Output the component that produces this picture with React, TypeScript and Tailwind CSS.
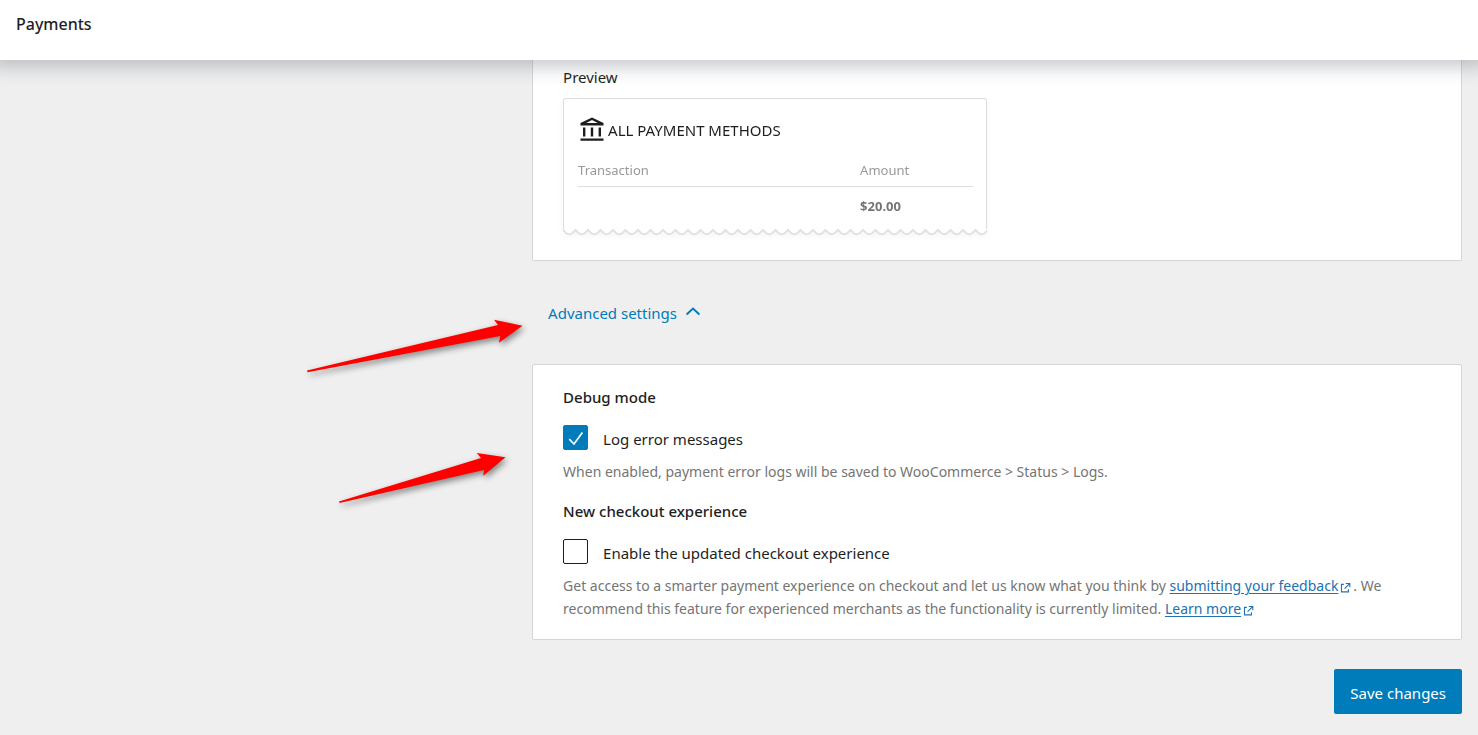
import { useState } from "react";
import type { ReactNode } from "react";
import { clsx } from "clsx";

type CheckOptionProps = {
  id: string;
  label: string;
  checked: boolean;
  onChange: (checked: boolean) => void;
};

function CheckOption({ id, label, checked, onChange }: CheckOptionProps) {
  return (
    <div className="flex items-center gap-[15px]">
      <span className="grid shrink-0">
        <input
          id={id}
          type="checkbox"
          checked={checked}
          onChange={(e) => onChange(e.target.checked)}
          className="col-start-1 row-start-1 size-[25px] appearance-none rounded-[2px] border border-[#1e1e1e] bg-white checked:border-[#007cba] checked:bg-[#007cba]"
        />
        <svg
          viewBox="0 0 25 25"
          className={clsx(
            "pointer-events-none col-start-1 row-start-1 size-[25px]",
            !checked && "hidden"
          )}
          fill="none"
          stroke="#fff"
          strokeWidth="1.7"
          aria-hidden="true"
        >
          <path d="M6.3 14.2 L11 19 L19.4 7.6" />
        </svg>
      </span>
      <label htmlFor={id} className="pt-1 text-[15px] leading-[21px] text-[#1e1e1e]">
        {label}
      </label>
    </div>
  );
}

function ExternalLink({ href, children }: { href: string; children: ReactNode }) {
  return (
    <a href={href} className="text-[#2271b1]">
      <span className="underline underline-offset-2">{children}</span>
      <svg
        viewBox="0 0 12 12"
        className="mx-0.5 inline-block size-[11px] align-[-2px]"
        fill="none"
        stroke="currentColor"
        strokeWidth="1.2"
        aria-hidden="true"
      >
        <path d="M4.2 2.6H1.6v8.2h7.6V8M6.3 1.6h4.4v4.2M10.5 1.8 5 7.3" />
      </svg>
    </a>
  );
}

function BankIcon() {
  return (
    <svg viewBox="0 0 24 24" className="size-6 shrink-0" fill="#1e1e1e" aria-hidden="true">
      <path
        fillRule="evenodd"
        d="M12 .6 23.5 6v2.6H.5V6zM12 2.9 6.2 6h11.6z"
      />
      <path d="M3 10.6h2.4v9H3zM10.8 10.6h2.4v9h-2.4zM18.6 10.6H21v9h-2.4zM.5 21.4h23v2.4H.5z" />
    </svg>
  );
}

// Torn paper edge at the bottom of the statement
function TornEdge() {
  return (
    <svg className="block h-[7px] w-full" aria-hidden="true">
      <defs>
        <pattern id="torn" width="12.5" height="7" patternUnits="userSpaceOnUse">
          <path d="M-1 -1V1.5L0 .8 L3.2 4.1 Q6.25 6.6 9.3 4.1 L12.5 .8 L13.5 1.5V-1z" fill="#fff" />
          <path
            d="M-1 1.8 L0 .8 L3.2 4.1 Q6.25 6.6 9.3 4.1 L12.5 .8 L13.5 1.8"
            fill="none"
            stroke="#ddd"
            strokeWidth="1.6"
          />
        </pattern>
      </defs>
      <rect width="100%" height="7" fill="url(#torn)" />
    </svg>
  );
}

function StatementPreview() {
  return (
    <div className="max-w-[424px] drop-shadow-[0_2px_3px_rgba(0,0,0,0.04)]">
      <div className="rounded-t-[3px] border border-b-0 border-[#ddd] bg-white pt-[18px] pr-[13px] pb-[13px] pl-[14px]">
        <div className="flex items-center gap-1 pl-[2px]">
          <BankIcon />
          <span className="pt-0.5 text-[15px] leading-5 text-[#1e1e1e]">ALL PAYMENT METHODS</span>
        </div>
        <table className="mt-[19px] w-full table-fixed text-left text-[13px] leading-5">
          <thead>
            <tr className="border-b border-[#ddd] text-[#999]">
              <th className="pb-1.5 font-normal">Transaction</th>
              <th className="w-[113px] pb-1.5 font-normal">Amount</th>
            </tr>
          </thead>
          <tbody>
            <tr className="text-[#757575]">
              <td />
              <td className="pt-[9px] font-bold">$20.00</td>
            </tr>
          </tbody>
        </table>
      </div>
      <TornEdge />
    </div>
  );
}

// Callout arrows that point at the settings
function Arrows() {
  return (
    <svg
      width="540"
      height="520"
      className="pointer-events-none absolute top-0 left-0 drop-shadow-[2px_3px_3px_rgba(0,0,0,0.45)]"
      fill="#f00"
      aria-hidden="true"
    >
      <path d="M307 370.5 498 325 494 319.7 522.5 325.7 499 342.7 500.3 336 307.5 372.2z" />
      <path d="M339 501.5 481 458 476.7 453 505.5 457.3 483.3 475.7 484 470 339.5 503z" />
    </svg>
  );
}

export default function App() {
  const [advancedOpen, setAdvancedOpen] = useState(true);
  const [debug, setDebug] = useState(true);
  const [newCheckout, setNewCheckout] = useState(false);

  return (
    <div className="relative min-h-screen bg-[#efefef] font-['Noto_Sans','Open_Sans',sans-serif]">
      <header className="relative z-10 flex h-[60px] items-center bg-white px-4 pb-3 shadow-[0_0_16px_8px_rgba(85,93,102,0.3)]">
        <h1 className="text-base leading-6 font-medium text-[#1e1e1e]">Payments</h1>
      </header>

      <main className="pr-4 pb-5 pl-[36%]">
        <section className="rounded-b-[2px] border border-t-0 border-[#d5d5d5] bg-white px-[30px] pt-[7px] pb-6">
          <h2 className="mb-[11px] text-[15px] leading-5 text-[#1e1e1e]">Preview</h2>
          <StatementPreview />
        </section>

        <button
          type="button"
          aria-expanded={advancedOpen}
          onClick={() => setAdvancedOpen((v) => !v)}
          className="mt-10 mb-[39px] ml-4 flex items-center gap-2 text-[15px] leading-6 text-[#007cba]"
        >
          Advanced settings
          <svg
            viewBox="0 0 16 16"
            className={clsx("size-4", !advancedOpen && "rotate-180")}
            fill="none"
            stroke="currentColor"
            strokeWidth="2"
            aria-hidden="true"
          >
            <path d="M1.6 9.4 8 3.6 14.4 9.4" />
          </svg>
        </button>

        {advancedOpen && (
          <section className="rounded-[2px] border border-[#d5d5d5] bg-white px-[30px] pt-5 pb-[19px]">
            <h2 className="mb-4 text-[15px] leading-6 font-medium text-[#1e1e1e]">Debug mode</h2>
            <CheckOption
              id="debug-log"
              label="Log error messages"
              checked={debug}
              onChange={setDebug}
            />
            <p className="mt-2.5 text-sm leading-[23px] text-[#757575]">
              When enabled, payment error logs will be saved to WooCommerce &gt; Status &gt; Logs.
            </p>

            <h2 className="mt-4 mb-4 text-[15px] leading-6 font-medium text-[#1e1e1e]">
              New checkout experience
            </h2>
            <CheckOption
              id="new-checkout"
              label="Enable the updated checkout experience"
              checked={newCheckout}
              onChange={setNewCheckout}
            />
            <p className="mt-2.5 text-sm leading-[23px] text-[#757575]">
              Get access to a smarter payment experience on checkout and let us know what you think
              by <ExternalLink href="#feedback">submitting your feedback</ExternalLink>. We
              recommend this feature for experienced merchants as the functionality is currently
              limited. <ExternalLink href="#learn-more">Learn more</ExternalLink>
            </p>
          </section>
        )}

        <div className="mt-[29px] flex justify-end">
          <button
            type="button"
            className="h-[45px] rounded-[2px] bg-[#007cba] px-4 pt-0.5 text-[15px] leading-5 text-white"
          >
            Save changes
          </button>
        </div>
      </main>

      <Arrows />
    </div>
  );
}
